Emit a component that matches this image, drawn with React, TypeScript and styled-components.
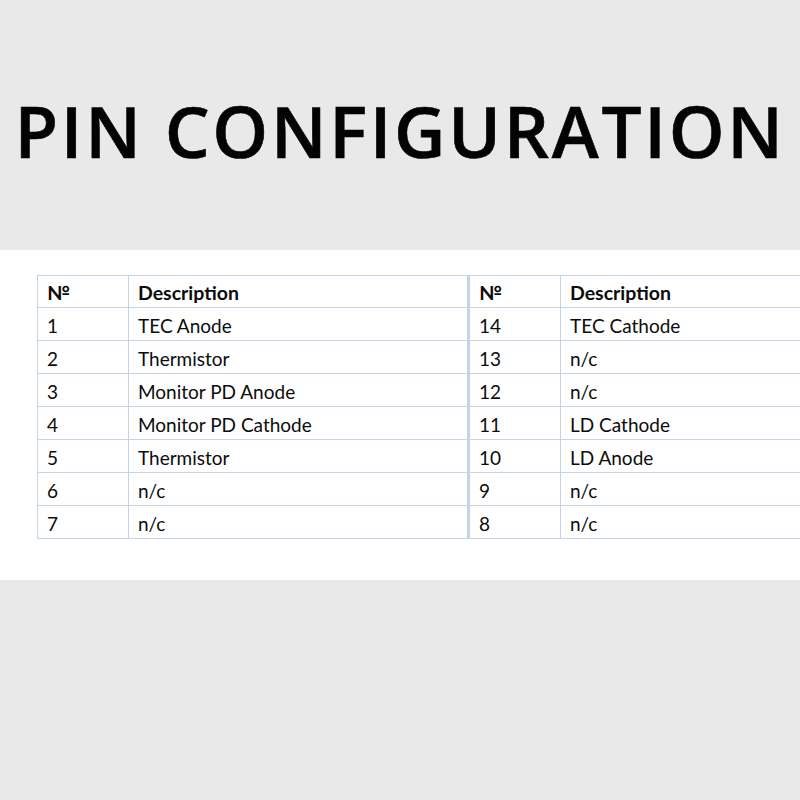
import React from "react";
import styled, { createGlobalStyle } from "styled-components";

const Global = createGlobalStyle`
  html, body { margin: 0; padding: 0; background: #e9e9e9; }
  body { width: 800px; height: 800px; overflow: hidden; }
`;

const Page = styled.div`
  width: 800px;
  height: 800px;
  background: #e9e9e9;
  overflow: hidden;
  display: flex;
  flex-direction: column;
`;

const Header = styled.header`
  height: 250px;
  display: flex;
  align-items: center;
  justify-content: center;
`;

const Title = styled.h1`
  margin: 0;
  padding-top: 10px;
  font-family: "Open Sans", sans-serif;
  font-weight: 600;
  font-size: 71px;
  letter-spacing: 2.7px;
  color: #030303;
  white-space: nowrap;
  -webkit-text-stroke: 0.6px #030303;
`;

const Panel = styled.section`
  height: 330px;
  background: #ffffff;
  padding: 25px 0 0 37px;
  box-sizing: border-box;
  overflow: hidden;
`;

const Table = styled.table`
  border-collapse: collapse;
  table-layout: fixed;
  width: 880px;
  font-family: Lato, "Open Sans", sans-serif;
  font-size: 19px;
  color: #0c0c0c;
`;

const Cell = styled.td<{ $bold?: boolean; $divider?: boolean; $head?: boolean }>`
  border: 1px solid #c3d3e8;
  ${(p) => (p.$divider ? "border-left: 3px solid #c3d3e8;" : "")}
  height: ${(p) => (p.$head ? 32 : 33)}px;
  padding: 2px 0 0 9px;
  box-sizing: border-box;
  font-weight: ${(p) => (p.$bold ? 700 : 400)};
  font-size: ${(p) => (p.$bold ? 19.5 : 19)}px;
  text-align: left;
  vertical-align: middle;
  white-space: nowrap;
`;

const rows: [string, string, string, string][] = [
  ["1", "TEC Anode", "14", "TEC Cathode"],
  ["2", "Thermistor", "13", "n/c"],
  ["3", "Monitor PD Anode", "12", "n/c"],
  ["4", "Monitor PD Cathode", "11", "LD Cathode"],
  ["5", "Thermistor", "10", "LD Anode"],
  ["6", "n/c", "9", "n/c"],
  ["7", "n/c", "8", "n/c"],
];

export default function App() {
  return (
    <Page>
      <Global />
      <Header>
        <Title>PIN CONFIGURATION</Title>
      </Header>
      <Panel>
        <Table>
          <colgroup>
            <col style={{ width: 91 }} />
            <col style={{ width: 340 }} />
            <col style={{ width: 92 }} />
            <col style={{ width: 357 }} />
          </colgroup>
          <thead>
            <tr>
              <Cell as="th" $bold $head>№</Cell>
              <Cell as="th" $bold $head>Description</Cell>
              <Cell as="th" $bold $head $divider>№</Cell>
              <Cell as="th" $bold $head>Description</Cell>
            </tr>
          </thead>
          <tbody>
            {rows.map((r) => (
              <tr key={r[0]}>
                <Cell>{r[0]}</Cell>
                <Cell>{r[1]}</Cell>
                <Cell $divider>{r[2]}</Cell>
                <Cell>{r[3]}</Cell>
              </tr>
            ))}
          </tbody>
        </Table>
      </Panel>
    </Page>
  );
}
